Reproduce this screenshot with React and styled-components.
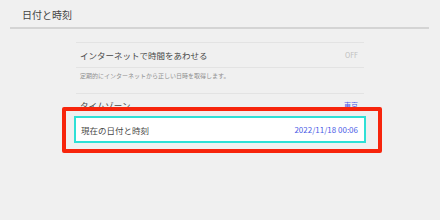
import React from 'react'
import styled, { createGlobalStyle } from "styled-components"

const GlobalStyle = createGlobalStyle`
  html, body {
    margin: 0;
    padding: 0;
    background: #f0f0f0;
  }
  body {
    font-family: "Noto Sans CJK JP", "Noto Sans", sans-serif;
  }
`

const Page = styled.div`
  width: 440px;
  height: 220px;
  background: #f0f0f0;
  overflow: hidden;
`

const Header = styled.div`
  height: 27px;
  display: flex;
  align-items: center;
  padding-left: 22px;
  box-sizing: border-box;
`

const Title = styled.h1`
  margin: 2px 0 0;
  font-size: 10px;
  font-weight: 400;
  color: #444;
`

const HeaderRule = styled.div`
  height: 2px;
  margin: 0 11px 0 10px;
  background: #d4d4d4;
`

const List = styled.div`
  width: 288px;
  margin: 13px 0 0 76px;
`

const Row = styled.div`
  display: flex;
  align-items: ${(p) => (p.top ? "flex-start" : "center")};
  justify-content: space-between;
  height: ${(p) => p.h}px;
  padding: ${(p) => (p.top ? "3px" : "0")} 6px 0 4px;
  border-top: 1px solid #e3e3e3;
  box-sizing: border-box;
`

const Label = styled.span`
  font-size: 8.5px;
  color: #484848;
`

const Note = styled.span`
  font-size: 6px;
  color: #909090;
`

const Value = styled.span`
  font-size: ${(p) => (p.small ? "7px" : "8px")};
  color: ${(p) => (p.muted ? "#c0c0c0" : "#4a5ce6")};
`

const Selected = styled.div`
  position: relative;
  display: flex;
  align-items: center;
  justify-content: space-between;
  height: 27px;
  margin: 0 -2px;
  padding: 0 6px 0 5px;
  border: 2px solid #2fe0d6;
  background: #ffffff;
  box-sizing: border-box;
`

const Callout = styled.div`
  position: absolute;
  top: -11px;
  left: -14px;
  right: -18px;
  bottom: -12px;
  border: 4px solid #f7250c;
  border-radius: 2px;
  pointer-events: none;
`

const App = () => {
  return (
    <Page>
      <GlobalStyle />
      <Header>
        <Title>日付と時刻</Title>
      </Header>
      <HeaderRule />
      <List>
        <Row h={25}>
          <Label>インターネットで時間をあわせる</Label>
          <Value small muted>OFF</Value>
        </Row>
        <Row h={26} top>
          <Note>定期的にインターネットから正しい日時を取得します。</Note>
        </Row>
        <Row h={23}>
          <Label>タイムゾーン</Label>
          <Value small>東京</Value>
        </Row>
        <Selected>
          <Label>現在の日付と時刻</Label>
          <Value>2022/11/18 00:06</Value>
          <Callout />
        </Selected>
      </List>
    </Page>
  )
}

export default App
